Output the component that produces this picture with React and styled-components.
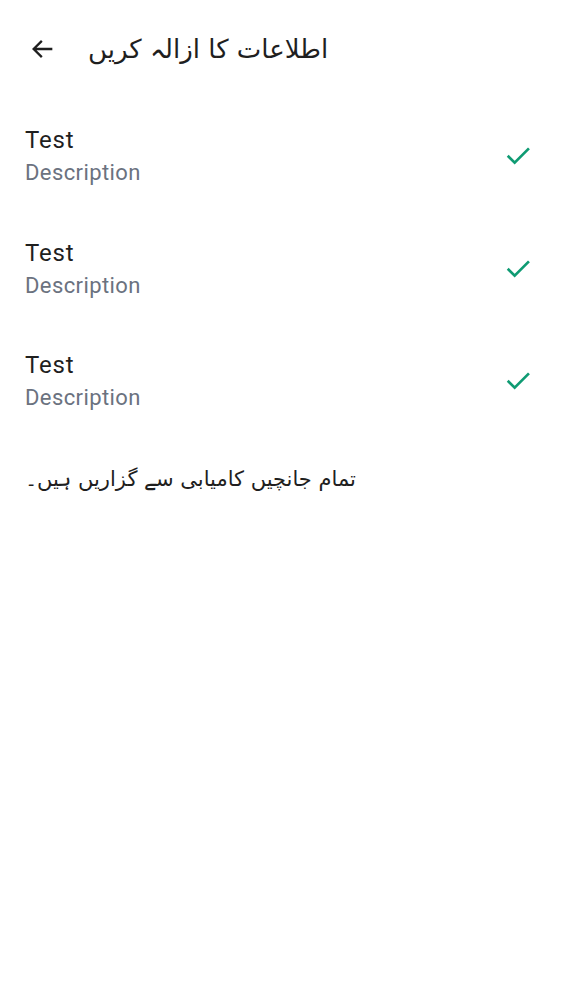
import React from "react";
import styled, { createGlobalStyle } from "styled-components";

const Global = createGlobalStyle`
  html, body {
    margin: 0;
    padding: 0;
    background: #fff;
  }
  body {
    font-family: Roboto, "DejaVu Sans", sans-serif;
  }
`;

const Page = styled.div`
  width: 562px;
  min-height: 1000px;
  background: #fff;
`;

const Header = styled.div`
  display: flex;
  align-items: center;
  height: 98px;
  padding: 0 0 0 28px;
  gap: 30px;
`;

const BackButton = styled.button`
  border: none;
  background: none;
  padding: 0;
  width: 30px;
  height: 30px;
  display: flex;
  align-items: center;
  justify-content: center;
  color: #1f1f1f;
  cursor: pointer;
`;

const Title = styled.h1`
  margin: 0;
  font-family: "DejaVu Sans", sans-serif;
  font-weight: normal;
  font-size: 26px;
  color: #1f1f1f;
`;

const List = styled.div`
  display: flex;
  flex-direction: column;
  padding: 2px 0 0;
`;

const Row = styled.div`
  display: flex;
  align-items: center;
  justify-content: space-between;
  height: 112.5px;
  padding: 0 28px 0 25px;
  box-sizing: border-box;
`;

const Texts = styled.div`
  display: flex;
  flex-direction: column;
`;

const RowTitle = styled.div`
  font-size: 24px;
  letter-spacing: 0.8px;
  color: #1f1f1f;
  line-height: 34px;
`;

const RowDesc = styled.div`
  font-size: 22px;
  letter-spacing: 0.4px;
  color: #6b7280;
  line-height: 32px;
`;

const Message = styled.p`
  margin: 0;
  padding: 26px 25px 0;
  font-family: "DejaVu Sans", sans-serif;
  font-size: 21px;
  line-height: 30px;
  color: #1f1f1f;
`;

const Check = () => (
  <svg width="32" height="32" viewBox="0 0 24 24" fill="none" stroke="#0f9b73" strokeWidth="2" strokeLinecap="square">
    <path d="M5 12.5l4.5 4.5L19.5 7" />
  </svg>
);

const items = [
  { title: "Test", desc: "Description" },
  { title: "Test", desc: "Description" },
  { title: "Test", desc: "Description" },
];

export default function App() {
  return (
    <Page>
      <Global />
      <Header>
        <BackButton aria-label="back">
          <svg width="28" height="28" viewBox="0 0 24 24" fill="none" stroke="#1f1f1f" strokeWidth="2">
            <path d="M20 12H4M11 5l-7 7 7 7" />
          </svg>
        </BackButton>
        <Title>اطلاعات کا ازالہ کریں</Title>
      </Header>
      <List>
        {items.map((it, i) => (
          <Row key={i}>
            <Texts>
              <RowTitle>{it.title}</RowTitle>
              <RowDesc>{it.desc}</RowDesc>
            </Texts>
            <Check />
          </Row>
        ))}
      </List>
      <Message>تمام جانچیں کامیابی سے گزاریں ہیں۔</Message>
    </Page>
  );
}
